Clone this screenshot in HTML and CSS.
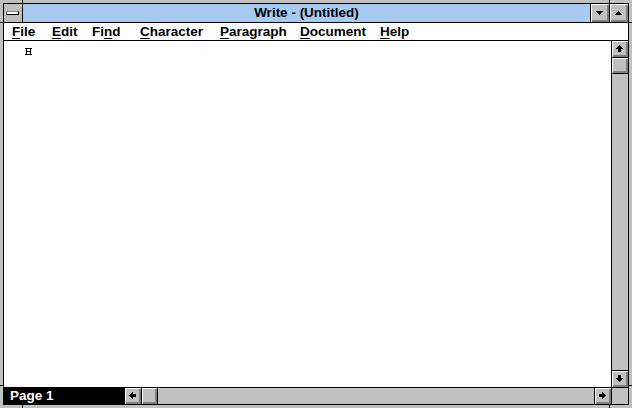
FILE: index.html
```html
<!DOCTYPE html>
<html>
<head>
<meta charset="utf-8">
<title>Write - (Untitled)</title>
<link rel="stylesheet" href="styles.css">
</head>
<body>
<div class="window">
  <div class="frame">
    <div class="titlebar">
      <div class="sysbox"><span class="sysbar"></span></div>
      <div class="title">Write - (Untitled)</div>
      <div class="tbtn"><svg width="7" height="4" viewBox="0 0 7 4"><path d="M0 0h7v1H0zM1 1h5v1H1zM2 2h3v1H2zM3 3h1v1H3z"/></svg></div>
      <div class="tbtn"><svg width="7" height="4" viewBox="0 0 7 4"><path d="M3 0h1v1H3zM2 1h3v1H2zM1 2h5v1H1zM0 3h7v1H0z"/></svg></div>
    </div>
    <div class="menubar">
      <span class="mi"><u>F</u>ile</span>
      <span class="mi"><u>E</u>dit</span>
      <span class="mi">Fi<u>n</u>d</span>
      <span class="mi"><u>C</u>haracter</span>
      <span class="mi"><u>P</u>aragraph</span>
      <span class="mi"><u>D</u>ocument</span>
      <span class="mi"><u>H</u>elp</span>
    </div>
    <div class="body">
      <div class="client">
        <svg class="endmark" width="7" height="7" viewBox="0 0 7 7"><path d="M0 0h7v1H0zM1 1h1v5H1zM5 1h1v5H5zM2 3h3v1H2zM0 6h7v1H0z"/></svg>
      </div>
      <div class="vscroll">
        <div class="sbtn up"><svg width="7" height="7" viewBox="0 0 7 7"><path d="M3 0h1v1H3zM2 1h3v1H2zM1 2h5v1H1zM0 3h7v1H0zM2 4h3v3H2z"/></svg></div>
        <div class="vthumb"></div>
        <div class="vtrack"></div>
        <div class="sbtn down"><svg width="7" height="7" viewBox="0 0 7 7"><path d="M2 0h3v3H2zM0 3h7v1H0zM1 4h5v1H1zM2 5h3v1H2zM3 6h1v1H3z"/></svg></div>
      </div>
    </div>
    <div class="statusrow">
      <div class="page">Page 1</div>
      <div class="hscroll">
        <div class="sbtn left"><svg width="7" height="7" viewBox="0 0 7 7"><path d="M0 3h1v1H0zM1 2h1v3H1zM2 1h1v5H2zM3 0h1v7H3zM4 2h3v3H4z"/></svg></div>
        <div class="hthumb"></div>
        <div class="htrack"></div>
        <div class="sbtn right"><svg width="7" height="7" viewBox="0 0 7 7"><path d="M0 2h3v3H0zM3 0h1v7H3zM4 1h1v5H4zM5 2h1v3H5zM6 3h1v1H6z"/></svg></div>
      </div>
      <div class="corner"></div>
    </div>
  </div>
</div>
</body>
</html>
```
FILE: styles.css
```css
* {
  box-sizing: border-box;
  margin: 0;
  padding: 0;
}

html, body {
  width: 632px;
  height: 408px;
  overflow: hidden;
}

body {
  font-family: "Liberation Sans", Arial, sans-serif;
  font-weight: bold;
  font-size: 13.5px;
  color: #000;
  background: #c0c0c0;
}

.window {
  width: 632px;
  height: 408px;
  padding: 3px;
  background-color: #c0c0c0;
  background-image:
    linear-gradient(#000, #000), linear-gradient(#000, #000),
    linear-gradient(#000, #000), linear-gradient(#000, #000),
    linear-gradient(#000, #000), linear-gradient(#000, #000),
    linear-gradient(#000, #000), linear-gradient(#000, #000);
  background-repeat: no-repeat;
  background-size: 1px 3px, 1px 3px, 1px 3px, 1px 3px,
                   3px 1px, 3px 1px, 3px 1px, 3px 1px;
  background-position: 22px 0, 609px 0, 22px 405px, 609px 405px,
                       0 22px, 0 385px, 629px 22px, 629px 385px;
}

.frame {
  display: flex;
  flex-direction: column;
  height: 100%;
  border: 1px solid #000;
  background: #c0c0c0;
}

/* ---------- title bar ---------- */
.titlebar {
  display: flex;
  height: 19px;
  flex: none;
  border-bottom: 1px solid #000;
}

.sysbox {
  width: 19px;
  border-right: 1px solid #000;
  background: #c0c0c0;
  display: flex;
  align-items: center;
  justify-content: center;
}

.sysbar {
  display: block;
  width: 13px;
  height: 4px;
  margin-left: -1px;
  background: #fff;
  border: 1px solid #808080;
  border-right-color: #000;
  border-bottom-color: #000;
}

.title {
  flex: 1;
  background: #a6caf0;
  text-align: center;
  line-height: 18px;
}

.tbtn {
  width: 19px;
  border-left: 1px solid #000;
  background: #c0c0c0;
  box-shadow: inset 1px 1px #fff, inset -1px -1px #808080, inset -2px -2px #808080;
  display: flex;
  align-items: center;
  justify-content: center;
  padding: 0 1px 1px 0;
}

/* ---------- menu bar ---------- */
.menubar {
  display: grid;
  grid-template-columns: 40px 40px 48px 80px 80px 80px auto;
  height: 18px;
  flex: none;
  padding-left: 8px;
  background: #fff;
  border-bottom: 1px solid #000;
  line-height: 17px;
}

.mi u {
  text-decoration-thickness: 1px;
  text-underline-offset: 2px;
}

/* ---------- client + vertical scrollbar ---------- */
.body {
  flex: 1;
  display: flex;
  min-height: 0;
}

.client {
  flex: 1;
  background: #fff;
  padding: 7px 0 0 21px;
}

.endmark {
  display: block;
}

.vscroll {
  width: 17px;
  border-left: 1px solid #000;
  display: flex;
  flex-direction: column;
  background: #c0c0c0;
}

.sbtn {
  background: #c0c0c0;
  box-shadow: inset 1px 1px #fff, inset -1px -1px #808080, inset -2px -2px #808080;
  display: flex;
  align-items: center;
  justify-content: center;
  padding: 0 1px 1px 0;
  flex: none;
}

.sbtn.up {
  height: 17px;
  border-bottom: 1px solid #000;
}

.sbtn.down {
  height: 17px;
  border-top: 1px solid #000;
}

.vthumb {
  height: 16px;
  border-bottom: 1px solid #000;
  background: #c0c0c0;
  box-shadow: inset 1px 1px #fff, inset -1px -1px #808080, inset -2px -2px #808080;
  flex: none;
}

.vtrack {
  flex: 1;
  background: #c0c0c0;
}

/* ---------- bottom row ---------- */
.statusrow {
  display: flex;
  height: 17px;
  flex: none;
  border-top: 1px solid #000;
}

.page {
  width: 121px;
  background: #000;
  color: #fff;
  padding-left: 6px;
  line-height: 16px;
  font-size: 13.5px;
}

.hscroll {
  flex: 1;
  display: flex;
  background: #c0c0c0;
}

.sbtn.left {
  width: 17px;
  border-right: 1px solid #000;
}

.sbtn.right {
  width: 17px;
  border-left: 1px solid #000;
}

.hthumb {
  width: 16px;
  border-right: 1px solid #000;
  background: #c0c0c0;
  box-shadow: inset 1px 1px #fff, inset -1px -1px #808080, inset -2px -2px #808080;
  flex: none;
}

.htrack {
  flex: 1;
  background: #c0c0c0;
}

.corner {
  width: 17px;
  border-left: 1px solid #000;
  background: #c0c0c0;
}
```
